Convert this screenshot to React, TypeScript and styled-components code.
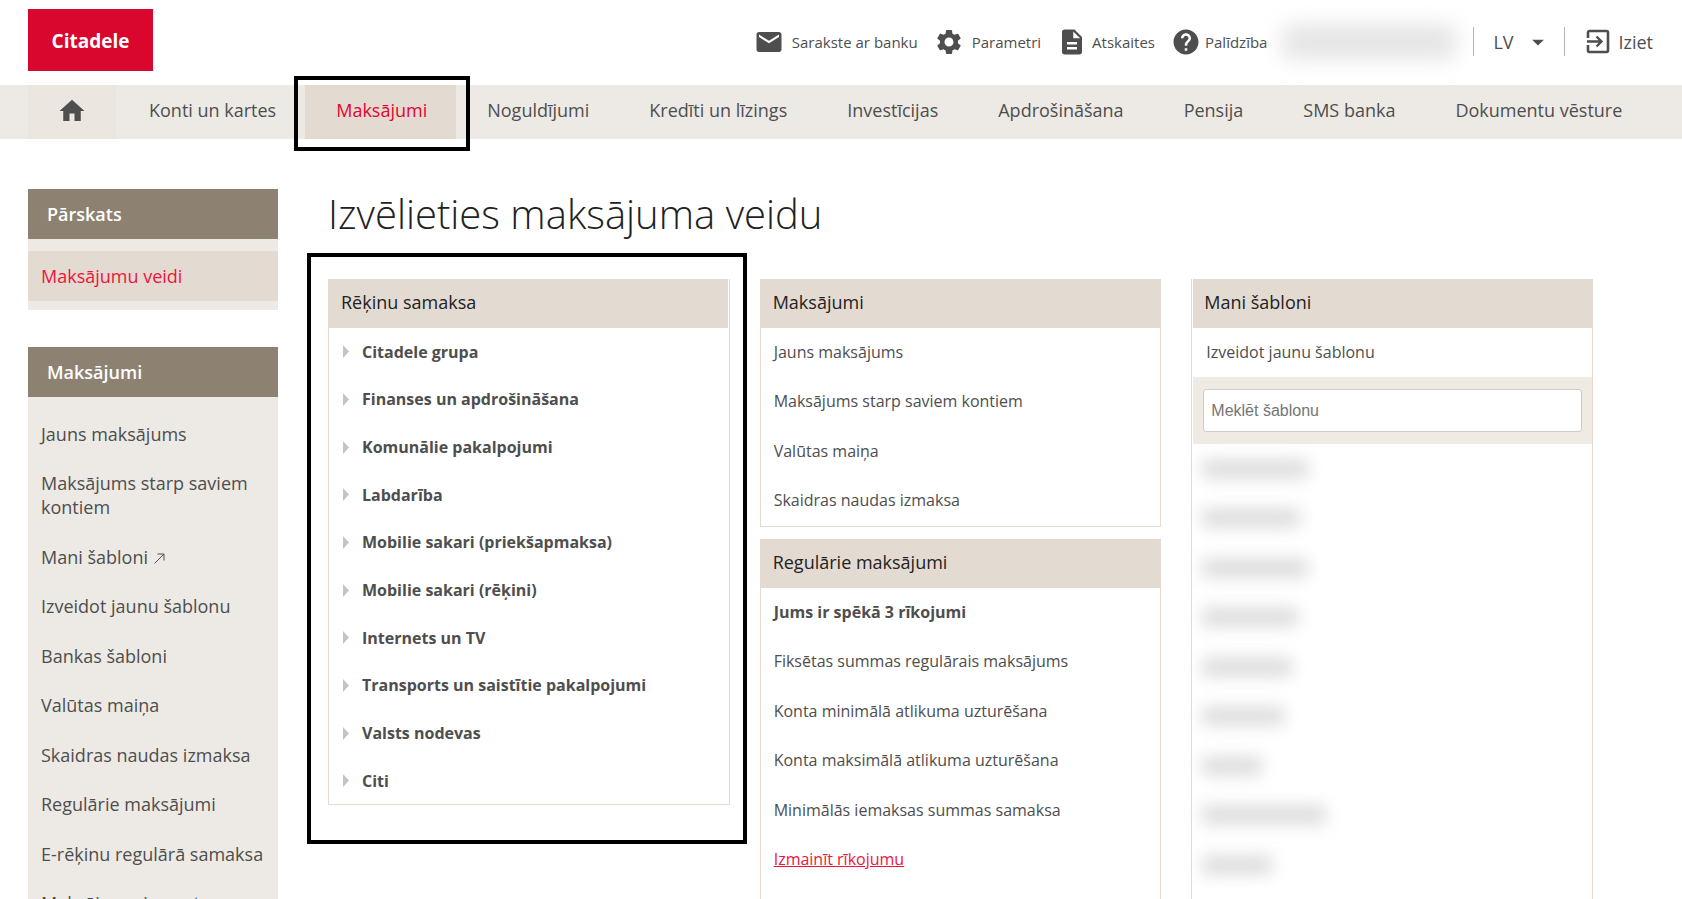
import React from 'react';
import styled, { createGlobalStyle, css } from 'styled-components';
import { MdMail, MdSettings, MdDescription, MdHelp, MdHome, MdArrowDropDown } from 'react-icons/md';

const color = {
  brand: '#d9062d',
  link: '#f0143c',
  text: '#4e4e4e',
  dark: '#222222',
  sand: '#e3dbd2',
  pale: '#edeae5',
  taupe: '#8d8272',
};

const GlobalStyle = createGlobalStyle`
  *, *::before, *::after { box-sizing: border-box; }
  html { scrollbar-width: none; }
  body {
    margin: 0;
    background: #fff;
    color: ${color.text};
    font-family: "Open Sans", "Noto Sans", sans-serif;
    font-size: 16px;
  }
  a { color: inherit; text-decoration: none; }
  ul { list-style: none; margin: 0; padding: 0; }
  h1, h2 { margin: 0; font-weight: 400; }
`;

const Header = styled.header`
  display: flex;
  align-items: center;
  height: 85px;
  padding: 0 29px 2px 28px;
`;

const Logo = styled.a`
  display: flex;
  align-items: center;
  justify-content: center;
  width: 125px;
  height: 62px;
  margin-bottom: 3px;
  padding-top: 2px;
  background: ${color.brand};
  color: #fff;
  font-size: 19px;
  font-weight: 700;
`;

const Tools = styled.nav`
  display: flex;
  align-items: center;
  gap: 16px;
  margin-left: auto;
`;

const ToolLink = styled.a<{ $gap?: number }>`
  display: flex;
  align-items: center;
  gap: ${(p) => p.$gap ?? 8}px;
  font-size: 15px;
  line-height: 20px;
  white-space: nowrap;
  svg { flex: none; }
`;

const HiddenName = styled.div`
  width: 176px;
  height: 36px;
  margin: 0 16px 0 14px;
  border-radius: 12px;
  background: #e6e6e6;
  filter: blur(10px);
`;

const Language = styled.label`
  position: relative;
  display: flex;
  align-items: center;
  height: 29px;
  border: solid #b5b5b5;
  border-width: 0 1px;
  svg {
    position: absolute;
    right: 12px;
    pointer-events: none;
  }
`;

const LanguageSelect = styled.select`
  appearance: none;
  width: 90px;
  padding: 0 19px;
  border: 0;
  background: none;
  color: inherit;
  font: inherit;
  font-size: 18px;
`;

const SignOut = styled.a`
  display: flex;
  align-items: center;
  gap: 7px;
  margin-left: 20px;
  font-size: 18px;
`;

const MainNav = styled.nav`
  height: 54px;
  padding: 0 28px;
  background: ${color.pale};
  ul { display: flex; height: 100%; }
`;

const NavItem = styled.li<{ $active?: boolean }>`
  position: relative;
  display: flex;
  background: ${(p) => (p.$active ? color.sand : 'transparent')};
  color: ${(p) => (p.$active ? '#e4032e' : 'inherit')};
`;

const NavLink = styled.a`
  display: flex;
  align-items: center;
  padding: 0 29px 4px 31px;
  font-size: 18px;
  white-space: nowrap;
`;

const HomeLink = styled.a`
  display: flex;
  align-items: center;
  justify-content: center;
  width: 88px;
  margin-right: 2px;
  padding-bottom: 2px;
  background: #ebe6e0;
`;

const Marker = styled.span<{ $inset: string }>`
  position: absolute;
  z-index: 1;
  inset: ${(p) => p.$inset};
  border: 4px solid #000;
  pointer-events: none;
`;

const Body = styled.div`
  display: flex;
  gap: 50px;
  padding: 50px 89px 0 28px;
`;

const Sidebar = styled.aside`
  flex: none;
  width: 250px;
`;

const SideSection = styled.section`
  margin-bottom: 37px;
  background: ${color.pale};
`;

const SideTitle = styled.h2`
  height: 50px;
  padding: 0 19px;
  background: ${color.taupe};
  color: #fff;
  font-size: 18px;
  font-weight: 600;
  line-height: 50px;
`;

const SideList = styled.ul`
  padding: 12px 0 9px;
`;

const SideItem = styled.li<{ $active?: boolean }>`
  padding: 13px;
  font-size: 18px;
  line-height: 24px;
  &:nth-child(even) { padding-top: 12px; }
  ${(p) => p.$active && css`
    background: ${color.sand};
    color: ${color.link};
  `}
`;

const NewWindowIcon = styled.svg`
  margin-left: 6px;
`;

const Main = styled.main`
  flex: 1;
  min-width: 0;
`;

const Title = styled.h1`
  height: 90px;
  color: ${color.dark};
  font-size: 40px;
  font-weight: 300;
  line-height: 50px;
  white-space: nowrap;
`;

const Columns = styled.div`
  display: grid;
  grid-template-columns: repeat(3, minmax(0, 1fr));
  gap: 30px;
`;

const Column = styled.div`
  display: flex;
  flex-direction: column;
  gap: 12px;
`;

const Panel = styled.section<{ $inset?: 'left' | 'right'; $grow?: boolean }>`
  position: relative;
  flex: ${(p) => (p.$grow ? 1 : 'none')};
  border: 1px solid ${color.sand};
  border-top: 0;
  ${(p) => p.$inset && `padding-${p.$inset}: 1px;`}
  ${(p) => p.$grow && 'padding-bottom: 40px;'}
`;

const PanelTitle = styled.h2<{ $inset?: 'left' | 'right' }>`
  height: 49px;
  margin: 0 ${(p) => (p.$inset === 'right' ? 0 : -1)}px 0 ${(p) => (p.$inset === 'left' ? 0 : -1)}px;
  padding: 0 13px 0 ${(p) => (p.$inset === 'left' ? 11 : 13)}px;
  background: ${color.sand};
  color: ${color.dark};
  font-size: 18px;
  line-height: 47px;
`;

const Category = styled.li`
  height: 48px;
  &:nth-child(3n + 1) { height: 47px; }
`;

const CategoryButton = styled.button`
  display: flex;
  align-items: center;
  gap: 13px;
  width: 100%;
  height: 100%;
  padding: 0 14px;
  border: 0;
  background: none;
  color: inherit;
  font: inherit;
  font-weight: 700;
  text-align: left;
`;

const PanelRow = styled.li<{ $strong?: boolean }>`
  height: 49px;
  padding: 0 13px;
  font-weight: ${(p) => (p.$strong ? 700 : 400)};
  line-height: 49px;
  &:nth-child(even) { height: 50px; }
`;

const EditLink = styled.a`
  color: ${color.link};
  text-decoration: underline;
`;

const SearchBand = styled.div`
  padding: 12px 10px;
  background: #efeae4;
`;

const SearchInput = styled.input`
  display: block;
  width: 100%;
  height: 43px;
  padding: 0 7px;
  border: 1px solid #ccc;
  border-radius: 3px;
  background: #fff;
  font-family: "Liberation Sans", Arial, sans-serif;
  font-size: 16px;
  &::placeholder { color: #757575; opacity: 1; }
`;

const TemplateRow = styled.li`
  display: flex;
  align-items: center;
  height: 49px;
  padding: 0 8px;
  &:nth-child(even) { height: 50px; }
`;

const HiddenTemplate = styled.span<{ $width: number }>`
  width: ${(p) => p.$width}px;
  height: 20px;
  border-radius: 8px;
  background: #dedede;
  filter: blur(8px);
`;

const navItems = [
  'Konti un kartes', 'Maksājumi', 'Noguldījumi', 'Kredīti un līzings', 'Investīcijas',
  'Apdrošināšana', 'Pensija', 'SMS banka', 'Dokumentu vēsture',
];

const sideItems = [
  'Jauns maksājums', 'Maksājums starp saviem kontiem', 'Mani šabloni', 'Izveidot jaunu šablonu',
  'Bankas šabloni', 'Valūtas maiņa', 'Skaidras naudas izmaksa', 'Regulārie maksājumi',
  'E-rēķinu regulārā samaksa', 'Maksājumu imports',
];

const categories = [
  'Citadele grupa', 'Finanses un apdrošināšana', 'Komunālie pakalpojumi', 'Labdarība',
  'Mobilie sakari (priekšapmaksa)', 'Mobilie sakari (rēķini)', 'Internets un TV',
  'Transports un saistītie pakalpojumi', 'Valsts nodevas', 'Citi',
];

const payments = ['Jauns maksājums', 'Maksājums starp saviem kontiem', 'Valūtas maiņa', 'Skaidras naudas izmaksa'];

const regular = [
  'Fiksētas summas regulārais maksājums', 'Konta minimālā atlikuma uzturēšana',
  'Konta maksimālā atlikuma uzturēšana', 'Minimālās iemaksas summas samaksa',
];

const templateWidths = [108, 100, 108, 98, 92, 84, 62, 126, 72];

export default function App() {
  return (
    <>
      <GlobalStyle />
      <Header>
        <Logo href="#">Citadele</Logo>
        <Tools>
          <ToolLink href="#"><MdMail size={30} />Sarakste ar banku</ToolLink>
          <ToolLink href="#"><MdSettings size={30} />Parametri</ToolLink>
          <ToolLink href="#" $gap={5}><MdDescription size={30} />Atskaites</ToolLink>
          <ToolLink href="#" $gap={4}><MdHelp size={30} />Palīdzība</ToolLink>
        </Tools>
        <HiddenName />
        <Language>
          <LanguageSelect aria-label="Valoda" defaultValue="LV">
            <option>LV</option>
          </LanguageSelect>
          <MdArrowDropDown size={28} />
        </Language>
        <SignOut href="#">
          <svg width="26" height="26" viewBox="0 0 26 26" fill="none" stroke="currentColor">
            <path d="M3 9V3.5a1.5 1.5 0 0 1 1.5-1.5h17A1.5 1.5 0 0 1 23 3.5v18a1.5 1.5 0 0 1-1.5 1.5h-17A1.5 1.5 0 0 1 3 21.5V16" strokeWidth="2.6" />
            <path d="M2 12.5h14M11.5 7.5l5 5-5 5" strokeWidth="2.4" />
          </svg>
          Iziet
        </SignOut>
      </Header>
      <MainNav>
        <ul>
          <NavItem><HomeLink href="#" aria-label="Sākums"><MdHome size={30} /></HomeLink></NavItem>
          {navItems.map((label) => (
            <NavItem key={label} $active={label === 'Maksājumi'}>
              <NavLink href="#">{label}</NavLink>
              {label === 'Maksājumi' && <Marker $inset="-9px -14px -12px -11px" />}
            </NavItem>
          ))}
        </ul>
      </MainNav>
      <Body>
        <Sidebar>
          <SideSection>
            <SideTitle>Pārskats</SideTitle>
            <SideList>
              <SideItem $active><a href="#">Maksājumu veidi</a></SideItem>
            </SideList>
          </SideSection>
          <SideSection>
            <SideTitle>Maksājumi</SideTitle>
            <SideList>
              {sideItems.map((label) => (
                <SideItem key={label}>
                  <a href="#">
                    {label}
                    {label === 'Mani šabloni' && (
                      <NewWindowIcon width="11" height="11" viewBox="0 0 11 11" fill="none" stroke="currentColor">
                        <path d="M0.5 10.5L10 1M3.5 1H10v6.5" />
                      </NewWindowIcon>
                    )}
                  </a>
                </SideItem>
              ))}
            </SideList>
          </SideSection>
        </Sidebar>
        <Main>
          <Title>Izvēlieties maksājuma veidu</Title>
          <Columns>
            <Column>
              <Panel $inset="right">
                <PanelTitle $inset="right">Rēķinu samaksa</PanelTitle>
                <ul>
                  {categories.map((label) => (
                    <Category key={label}>
                      <CategoryButton type="button">
                        <svg width="6" height="13" viewBox="0 0 6 13"><path d="M0 0L6 6.5L0 13Z" fill="#c4c4c4" /></svg>
                        {label}
                      </CategoryButton>
                    </Category>
                  ))}
                </ul>
                <Marker $inset="-26px -18px -40px -22px" />
              </Panel>
            </Column>
            <Column>
              <Panel>
                <PanelTitle>Maksājumi</PanelTitle>
                <ul>
                  {payments.map((label) => (
                    <PanelRow key={label}><a href="#">{label}</a></PanelRow>
                  ))}
                </ul>
              </Panel>
              <Panel $grow>
                <PanelTitle>Regulārie maksājumi</PanelTitle>
                <ul>
                  <PanelRow $strong>Jums ir spēkā 3 rīkojumi</PanelRow>
                  {regular.map((label) => (
                    <PanelRow key={label}><a href="#">{label}</a></PanelRow>
                  ))}
                  <PanelRow><EditLink href="#">Izmainīt rīkojumu</EditLink></PanelRow>
                </ul>
              </Panel>
            </Column>
            <Column>
              <Panel $inset="left" $grow>
                <PanelTitle $inset="left">Mani šabloni</PanelTitle>
                <ul>
                  <PanelRow><a href="#">Izveidot jaunu šablonu</a></PanelRow>
                </ul>
                <SearchBand>
                  <SearchInput type="text" aria-label="Meklēt šablonu" placeholder="Meklēt šablonu" />
                </SearchBand>
                <ul>
                  {templateWidths.map((width, i) => (
                    <TemplateRow key={i}><HiddenTemplate $width={width} /></TemplateRow>
                  ))}
                </ul>
              </Panel>
            </Column>
          </Columns>
        </Main>
      </Body>
    </>
  );
}
